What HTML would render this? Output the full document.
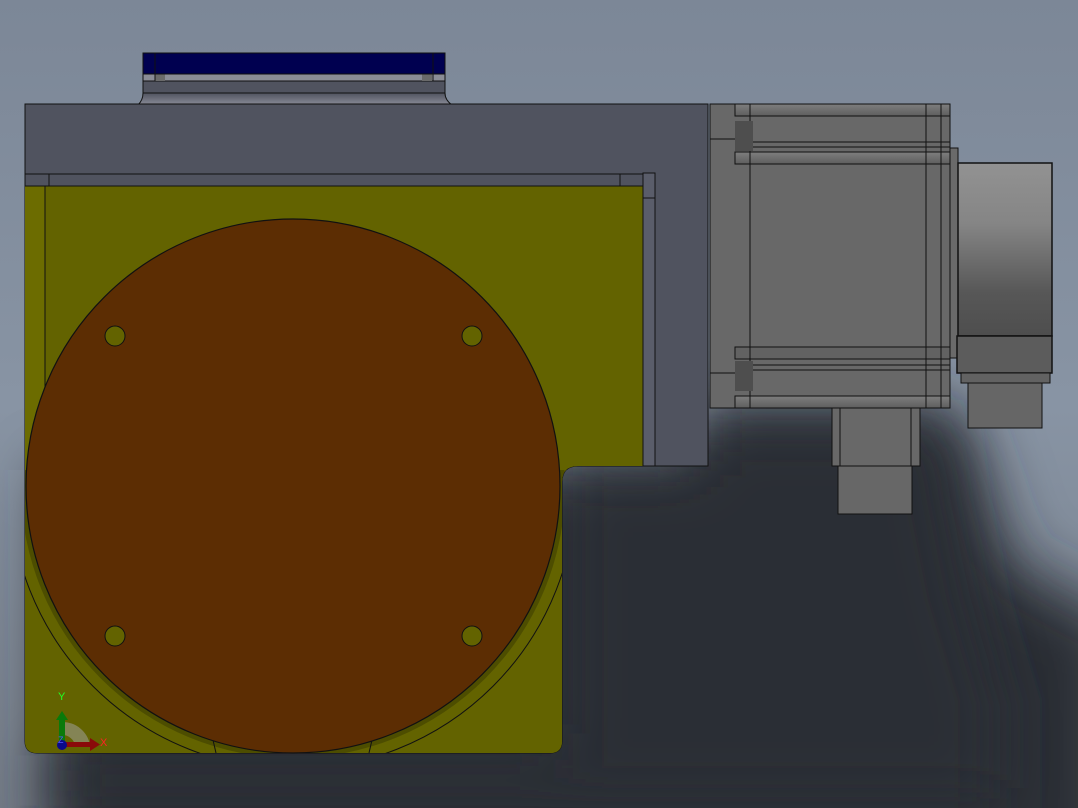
<!DOCTYPE html>
<html><head><style>html,body{margin:0;padding:0;width:1078px;height:808px;overflow:hidden}svg{display:block}</style></head>
<body>
<svg width="1078" height="808" viewBox="0 0 1078 808" xmlns="http://www.w3.org/2000/svg" style="overflow:hidden">
<defs>
<linearGradient id="bg" x1="0" y1="0" x2="0" y2="1">
<stop offset="0" stop-color="#7c8797"/><stop offset="0.5" stop-color="#8894a4"/><stop offset="1" stop-color="#767e8a"/>
</linearGradient>
<filter id="blur" filterUnits="userSpaceOnUse" x="-300" y="-300" width="1700" height="1400"><feGaussianBlur stdDeviation="30"/></filter>
<linearGradient id="enc" x1="0" y1="0" x2="0" y2="1">
<stop offset="0" stop-color="#929292"/><stop offset="0.35" stop-color="#858585"/><stop offset="0.75" stop-color="#575757"/><stop offset="1" stop-color="#4e4e4e"/>
</linearGradient>
<linearGradient id="bar" x1="0" y1="0" x2="0" y2="1">
<stop offset="0" stop-color="#7e7e7e"/><stop offset="1" stop-color="#5e5e5e"/>
</linearGradient>
<linearGradient id="flare" x1="0" y1="0" x2="0" y2="1">
<stop offset="0" stop-color="#50535f"/><stop offset="1" stop-color="#8a8c98"/>
</linearGradient>
<clipPath id="plate"><path d="M25 104 H708 V466 H578 Q562 466 562 482 V741 Q562 753 550 753 H37 Q25 753 25 741 Z"/></clipPath>
<clipPath id="low"><rect x="0" y="470" width="1078" height="338"/></clipPath>
</defs>
<rect width="1078" height="808" fill="url(#bg)"/>
<path d="M50 470 H700 V410 H960 L985 480 L1010 560 L1120 620 V950 H50 Z" fill="#2c2f35" filter="url(#blur)"/>
<path d="M562 466 H700 V420 H940 L950 500 L970 600 L1000 700 V808 H60 V753 H562 Z" fill="#2c2f35" filter="url(#blur)"/>

<!-- top flange -->
<path d="M138 105 Q143 100 143 93 H445 Q445 100 452 105 Z" fill="url(#flare)" stroke="#111" stroke-width="1"/>
<rect x="143" y="81" width="302" height="12" fill="#50535f" stroke="#111"/>
<rect x="143" y="74" width="302" height="7" fill="#8a8c96" stroke="#111"/>
<rect x="155" y="74" width="10" height="7" fill="#6a6a6a"/>
<rect x="422" y="74" width="10" height="7" fill="#6a6a6a"/>
<rect x="143" y="53" width="302" height="21" fill="#000050" stroke="#111"/>
<line x1="155" y1="53" x2="155" y2="81" stroke="#111"/><line x1="433" y1="53" x2="433" y2="81" stroke="#111"/>

<!-- body -->
<path d="M25 104 H708 V466 H578 Q562 466 562 482 V741 Q562 753 550 753 H37 Q25 753 25 741 Z" fill="#50535f" stroke="#111"/>
<g clip-path="url(#plate)">
<rect x="25" y="186" width="618" height="580" fill="#636300"/>
<rect x="25" y="466" width="600" height="300" fill="#636300"/>
<rect x="25" y="186" width="20" height="290" fill="#6c6c00"/>
<line x1="45" y1="186" x2="45" y2="466" stroke="#111"/>
<g clip-path="url(#low)">
<circle cx="293" cy="486" r="283" fill="none" stroke="#111" stroke-width="1"/>
<circle cx="293" cy="486" r="272" fill="#4d4d00"/>
</g>
<line x1="213" y1="740" x2="216" y2="753" stroke="#111"/><line x1="372" y1="740" x2="369" y2="753" stroke="#111"/>
</g>
<rect x="25" y="174" width="623" height="12" fill="#50535f" stroke="#111"/>
<line x1="49" y1="174" x2="49" y2="186" stroke="#111"/><line x1="620" y1="174" x2="620" y2="186" stroke="#111"/>
<rect x="643" y="173" width="12" height="293" fill="#5a5d6a" stroke="#111"/>
<line x1="643" y1="198" x2="655" y2="198" stroke="#111"/>

<!-- disc -->
<circle cx="293" cy="486" r="267" fill="#5c2d03" stroke="#111" stroke-width="1.2"/>
<g fill="#636300" stroke="#111"><circle cx="115" cy="336" r="10"/><circle cx="472" cy="336" r="10"/><circle cx="115" cy="636" r="10"/><circle cx="472" cy="636" r="10"/></g>

<!-- motor -->
<g stroke="#111" stroke-width="1">
<rect x="710" y="104" width="240" height="304" fill="#686868"/>
<rect x="735" y="104" width="215" height="12" fill="url(#bar)"/>
<rect x="735" y="152" width="215" height="12" fill="url(#bar)"/>
<rect x="735" y="347" width="215" height="12" fill="#626262"/>
<rect x="735" y="396" width="215" height="12" fill="url(#bar)"/>
<line x1="750" y1="104" x2="750" y2="408"/>
<line x1="926" y1="104" x2="926" y2="408"/>
<line x1="941" y1="104" x2="941" y2="408"/>
<line x1="710" y1="139" x2="735" y2="139"/><line x1="710" y1="373" x2="735" y2="373"/>
<line x1="750" y1="142" x2="950" y2="142"/><line x1="750" y1="147" x2="950" y2="147"/>
<line x1="750" y1="365" x2="950" y2="365"/><line x1="750" y1="370" x2="950" y2="370"/>
<rect x="735" y="121" width="18" height="30" fill="#4e4e4e" stroke="none"/>
<rect x="735" y="361" width="18" height="30" fill="#4e4e4e" stroke="none"/>
<rect x="950" y="148" width="8" height="210" fill="#6a6a6a"/>
<rect x="958" y="163" width="94" height="173" fill="url(#enc)" stroke-width="1.5"/>
<rect x="957" y="336" width="95" height="37" fill="#5c5c5c" stroke-width="1.5"/>
<rect x="961" y="373" width="89" height="10" fill="#626262"/>
<rect x="968" y="383" width="74" height="45" fill="#666"/>
<rect x="832" y="408" width="88" height="58" fill="#686868"/>
<line x1="840" y1="408" x2="840" y2="466"/><line x1="911" y1="408" x2="911" y2="466"/>
<rect x="838" y="466" width="74" height="48" fill="#676767"/>
</g>

<!-- triad -->
<path d="M62 722 A28 28 0 0 1 90 745 L75 745 A13 13 0 0 0 62 735 Z" fill="#8c8c6a" opacity="0.8"/>
<rect x="59" y="718" width="6" height="27" fill="#0a7a0a"/>
<path d="M56 720 L62 711 L68 720 Z" fill="#0a7a0a"/>
<rect x="62" y="742" width="30" height="5" fill="#8a0a0a"/>
<path d="M90 738 L100 744.5 L90 751 Z" fill="#8a0a0a"/>
<circle cx="62" cy="745" r="5" fill="#0a0a8a"/>
<text x="58" y="700" font-family="Liberation Sans, sans-serif" font-size="11" fill="#2f2">Y</text>
<text x="100" y="746" font-family="Liberation Sans, sans-serif" font-size="11" fill="#f22">X</text>
<text x="58" y="743" font-family="Liberation Sans, sans-serif" font-size="9" fill="#55f">Z</text>
</svg>
</body></html>
